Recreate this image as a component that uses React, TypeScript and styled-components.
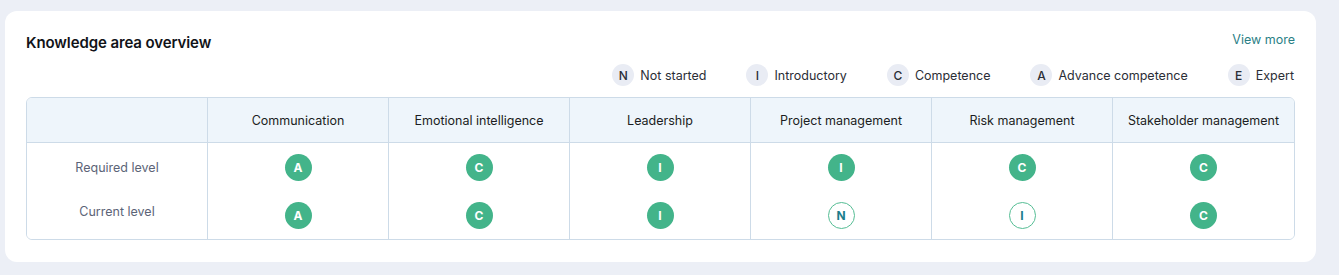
import React from "react";
import styled, { createGlobalStyle } from "styled-components";

const GlobalStyle = createGlobalStyle`
  html, body {
    margin: 0;
    padding: 0;
    background: #eceff6;
    font-family: "Inter", "Noto Sans", sans-serif;
  }
`;

const Page = styled.div`
  padding: 11px 23px 13px 5px;
`;

const Card = styled.section`
  background: #ffffff;
  border-radius: 12px;
  padding: 22px 21px 22px 21px;
`;

const Header = styled.div`
  display: flex;
  align-items: center;
  justify-content: space-between;
  height: 18px;
`;

const Title = styled.h2`
  margin: 0;
  font-size: 15px;
  font-weight: 600;
  color: #111318;
  letter-spacing: -0.1px;
`;

const ViewMore = styled.a`
  font-size: 12.5px;
  color: #2b7f86;
  text-decoration: none;
  cursor: pointer;
  margin-top: -6px;
`;

const Legend = styled.div`
  display: flex;
  justify-content: flex-end;
  gap: 40px;
  margin-top: 13px;
  padding-right: 1px;
  height: 22px;
`;

const LegendItem = styled.div`
  display: flex;
  align-items: center;
  gap: 6px;
  font-size: 12.5px;
  color: #2b2e36;
`;

const LegendDot = styled.span`
  width: 22px;
  height: 22px;
  border-radius: 50%;
  background: #e9ecf4;
  display: grid;
  place-items: center;
  font-size: 12px;
  font-weight: 500;
  color: #2b2e36;
`;

const Table = styled.div`
  margin-top: 11px;
  border: 1px solid #cddbe8;
  border-radius: 6px;
  overflow: hidden;
  display: grid;
  grid-template-columns: repeat(7, 1fr);
  grid-template-rows: 45px 48px 48px;
`;

const Cell = styled.div<{ $head?: boolean; $last?: boolean; $label?: boolean }>`
  display: flex;
  align-items: center;
  justify-content: center;
  font-size: 12.5px;
  background: ${(p) => (p.$head ? "#eef5fb" : "#ffffff")};
  color: ${(p) => (p.$head ? "#1b1d22" : p.$label ? "#5c6477" : "#1b1d22")};
  border-right: ${(p) => (p.$last ? "none" : "1px solid #cddbe8")};
  border-bottom: ${(p) => (p.$head ? "1px solid #cddbe8" : "none")};
`;

const RowLabel = styled.span<{ $raise?: boolean }>`
  margin-bottom: ${(p) => (p.$raise ? "8px" : "0")};
`;

const Badge = styled.span<{ $outline?: boolean }>`
  width: 27px;
  height: 27px;
  box-sizing: border-box;
  border-radius: 50%;
  display: grid;
  place-items: center;
  font-size: 12px;
  font-weight: 700;
  background: ${(p) => (p.$outline ? "#ffffff" : "#43b48a")};
  color: ${(p) => (p.$outline ? "#1b7d8c" : "#ffffff")};
  border: ${(p) => (p.$outline ? "1px solid #55bd94" : "none")};
`;

const legend = [
  { key: "N", label: "Not started" },
  { key: "I", label: "Introductory" },
  { key: "C", label: "Competence" },
  { key: "A", label: "Advance competence" },
  { key: "E", label: "Expert" },
];

const areas = [
  { name: "Communication", required: "A", current: "A" },
  { name: "Emotional intelligence", required: "C", current: "C" },
  { name: "Leadership", required: "I", current: "I" },
  { name: "Project management", required: "I", current: "N", below: true },
  { name: "Risk management", required: "C", current: "I", below: true },
  { name: "Stakeholder management", required: "C", current: "C" },
];

export default function App() {
  const lastIdx = areas.length - 1;
  return (
    <>
      <GlobalStyle />
      <Page>
        <Card>
          <Header>
            <Title>Knowledge area overview</Title>
            <ViewMore>View more</ViewMore>
          </Header>
          <Legend>
            {legend.map((l) => (
              <LegendItem key={l.key}>
                <LegendDot>{l.key}</LegendDot>
                {l.label}
              </LegendItem>
            ))}
          </Legend>
          <Table>
            <Cell $head />
            {areas.map((a, i) => (
              <Cell key={a.name} $head $last={i === lastIdx}>
                {a.name}
              </Cell>
            ))}
            <Cell $label>
              <RowLabel>Required level</RowLabel>
            </Cell>
            {areas.map((a, i) => (
              <Cell key={a.name + "-req"} $last={i === lastIdx}>
                <Badge>{a.required}</Badge>
              </Cell>
            ))}
            <Cell $label>
              <RowLabel $raise>Current level</RowLabel>
            </Cell>
            {areas.map((a, i) => (
              <Cell key={a.name + "-cur"} $last={i === lastIdx}>
                <Badge $outline={a.below}>{a.current}</Badge>
              </Cell>
            ))}
          </Table>
        </Card>
      </Page>
    </>
  );
}
